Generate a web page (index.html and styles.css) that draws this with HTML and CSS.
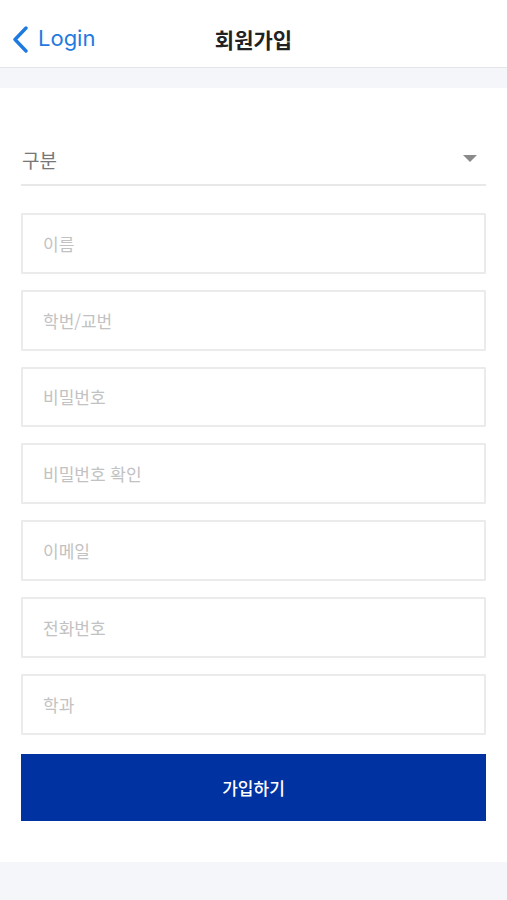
FILE: index.html
```html
<!DOCTYPE html>
<html lang="ko">
<head>
    <meta charset="utf-8">
    <title>회원가입</title>
    <link rel="stylesheet" href="styles.css">
</head>
<body>
    <div class="navbar">
        <a class="back" href="#">
            <svg width="17" height="27" viewBox="0 0 17 27">
                <path d="M14 2 L3 13.5 L14 25" fill="none" stroke="#1f7ae0" stroke-width="3.4" stroke-linecap="round" stroke-linejoin="round"/>
            </svg>
            <span>Login</span>
        </a>
        <h1 class="title">회원가입</h1>
    </div>
    <div class="band"></div>

    <form class="signup">
        <div class="select-row">
            <span class="select-label">구분</span>
            <span class="caret"></span>
        </div>

        <input class="field" type="text" placeholder="이름">
        <input class="field" type="text" placeholder="학번/교번">
        <input class="field" type="password" placeholder="비밀번호">
        <input class="field" type="password" placeholder="비밀번호 확인">
        <input class="field" type="email" placeholder="이메일">
        <input class="field" type="tel" placeholder="전화번호">
        <input class="field" type="text" placeholder="학과">

        <button class="submit" type="button">가입하기</button>
    </form>

    <div class="footer-band"></div>
</body>
</html>
```

FILE: styles.css
```css
body {
    margin: 0;
    background-color: #ffffff;
    font-family: "Noto Sans CJK KR", "Noto Sans", sans-serif;
}

.navbar {
    position: relative;
    height: 67px;
    display: flex;
    align-items: center;
    justify-content: center;
    border-bottom: 1px solid #e3e5e8;
}

.back {
    position: absolute;
    left: 12px;
    top: 26px;
    display: flex;
    align-items: center;
    gap: 9px;
    text-decoration: none;
    color: #1f7ae0;
}

.back span {
    font-family: "Inter", "Noto Sans", sans-serif;
    font-size: 22px;
    line-height: 27px;
    margin-top: -2px;
}

.title {
    margin: 0;
    font-size: 21px;
    font-weight: 700;
    color: #222222;
    margin-top: 10px;
}

.band {
    height: 20px;
    background-color: #f4f6f9;
}

/* Signup form */
.signup {
    display: flex;
    flex-direction: column;
    padding: 42px 21px 41px;
}

.select-row {
    height: 54px;
    display: flex;
    align-items: center;
    justify-content: space-between;
    border-bottom: 2px solid #e8e8e8;
    margin-bottom: 27px;
}

.select-label {
    font-size: 19px;
    color: #777777;
    margin-left: 1px;
    margin-top: 4px;
}

.caret {
    width: 0;
    height: 0;
    border-left: 7px solid transparent;
    border-right: 7px solid transparent;
    border-top: 7px solid #8a8a8a;
    margin-right: 9px;
    margin-top: 3px;
}

.field {
    box-sizing: border-box;
    height: 60.8px;
    margin: 0 0 16px;
    padding: 0 20px;
    border: 2px solid #ebebeb;
    border-radius: 1px;
    font-family: inherit;
    font-size: 17px;
    color: #333333;
    outline: none;
}

.field::placeholder {
    color: #c2c2c2;
}

.submit {
    height: 67px;
    margin-top: 3px;
    border: none;
    background-color: #0033a1;
    color: #ffffff;
    font-family: inherit;
    font-size: 17px;
    font-weight: 500;
}

.footer-band {
    height: 60px;
    background-color: #f4f6f9;
}
```
